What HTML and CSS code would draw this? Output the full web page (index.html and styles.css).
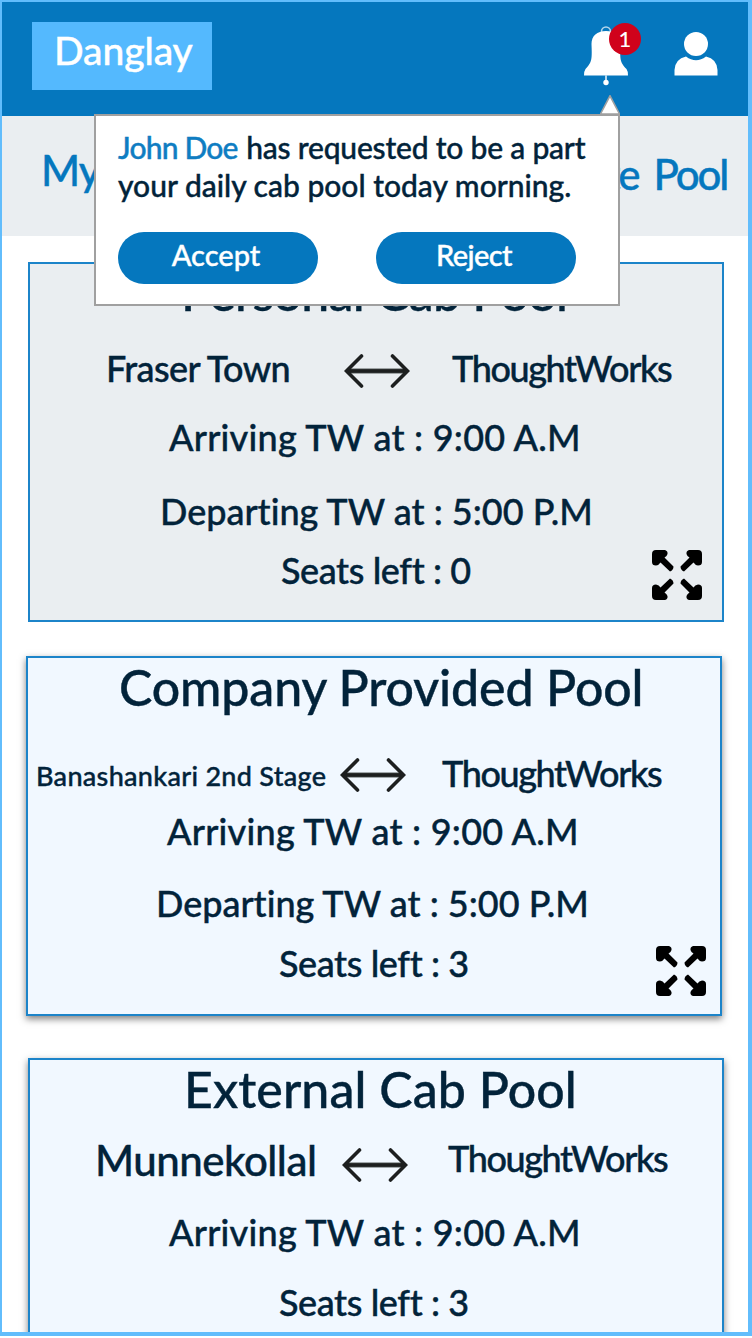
FILE: index.html
```
<!DOCTYPE html>
<html lang="en">
<head>
<meta charset="utf-8">
<title>Danglay</title>
<link rel="stylesheet" href="styles.css">
</head>
<body>
<svg width="0" height="0" class="defs">
  <symbol id="both-ways" viewBox="0 0 66 36">
    <path d="M3 18H63" stroke="#555b5b" stroke-width="5"/>
    <path d="M3 18H63M17.500 3L2.500 18L17.500 33M48.500 3L63.500 18L48.500 33" fill="none" stroke="#1d1f1f" stroke-width="3.600" stroke-linecap="round"/>
  </symbol>
  <symbol id="expand" viewBox="0 0 50 50">
    <g id="expand-arrow">
      <path d="M4 0H13Q16 1 15.500 4Q15 6 12.500 7.500L21.500 16.500Q21.500 20 18 21.500L8.500 12.500Q7 15 4 15.500Q0 15.500 0 12V4Q0 0 4 0Z"/>
    </g>
    <use href="#expand-arrow" transform="matrix(-1 0 0 1 50 0)"/>
    <use href="#expand-arrow" transform="matrix(1 0 0 -1 0 50)"/>
    <use href="#expand-arrow" transform="matrix(-1 0 0 -1 50 50)"/>
  </symbol>
</svg>
<div class="frame">
  <header class="header">
    <div class="brand">Danglay</div>
    <div class="actions">
      <div class="bell">
        <svg width="44" height="60" viewBox="0 0 44 60">
          <circle cx="22" cy="5.500" r="4.500" fill="none" stroke="#b5d6ec" stroke-width="1.600"/>
          <path d="M22 5C13 5 7.500 10 7.500 18C8 32 8.500 36 1.500 43Q0 45 0 49.500H44Q44 45 42.500 43C35.500 36 36 32 36.500 18C36.500 10 31 5 22 5Z" fill="#fff"/>
          <path d="M22 49V56" stroke="#b5d6ec" stroke-width="2"/>
          <circle cx="22" cy="56.500" r="2.700" fill="#fff"/>
        </svg>
        <span class="count">1</span>
      </div>
      <svg width="44" height="44" viewBox="0 0 44 44" fill="#fff">
        <circle cx="22" cy="12" r="12"/>
        <path d="M0.500 43.500V38Q1 27 12 24.500Q22 32 32 24.500Q43 27 43.500 38V43.500Z"/>
      </svg>
    </div>
  </header>
  <nav class="tabs">
    <span class="tab tab-mine">My Pool</span>
    <span class="tab tab-create">Create Pool</span>
  </nav>
  <main class="pools">
    <section class="card card-personal">
      <h2 class="title">Personal Cab Pool</h2>
      <div class="route">
        <span class="origin">Fraser Town</span>
        <svg class="arrow" width="66" height="36"><use href="#both-ways"/></svg>
        <span class="dest">ThoughtWorks</span>
      </div>
      <p class="line arriving">Arriving TW at : 9:00 A.M</p>
      <p class="line departing">Departing TW at : 5:00 P.M</p>
      <p class="line seats">Seats left : 0</p>
      <svg class="expand" width="50" height="50"><use href="#expand"/></svg>
    </section>
    <section class="card card-company">
      <h2 class="title">Company Provided Pool</h2>
      <div class="route">
        <span class="origin">Banashankari 2nd Stage</span>
        <svg class="arrow" width="66" height="36"><use href="#both-ways"/></svg>
        <span class="dest">ThoughtWorks</span>
      </div>
      <p class="line arriving">Arriving TW at : 9:00 A.M</p>
      <p class="line departing">Departing TW at : 5:00 P.M</p>
      <p class="line seats">Seats left : 3</p>
      <svg class="expand" width="50" height="50"><use href="#expand"/></svg>
    </section>
    <section class="card card-external">
      <h2 class="title">External Cab Pool</h2>
      <div class="route">
        <span class="origin">Munnekollal</span>
        <svg class="arrow" width="66" height="36"><use href="#both-ways"/></svg>
        <span class="dest">ThoughtWorks</span>
      </div>
      <p class="line arriving">Arriving TW at : 9:00 A.M</p>
      <p class="line seats">Seats left : 3</p>
    </section>
  </main>
  <div class="popup">
    <svg class="pointer" width="20" height="20" viewBox="0 0 20 20"><path d="M0.500 19L10 0.800L19.500 19Z" fill="#fff" stroke="#a0a0a0" stroke-width="1.600"/></svg>
    <p class="message"><span class="name">John Doe</span> <span class="request">has requested to be a part</span><br>your daily cab pool today morning.</p>
    <div class="buttons">
      <button class="button accept">Accept</button>
      <button class="button reject">Reject</button>
    </div>
  </div>
</div>
</body>
</html>
```
FILE: styles.css
```
* { box-sizing: border-box; }
body {
  margin: 0;
  background: #fff;
  color: #02233a;
  font-family: Lato, "Liberation Sans", sans-serif;
  font-weight: 500;
  font-variant-ligatures: none;
  white-space: nowrap;
  -webkit-text-stroke: 0.4px;
}
.defs { position: absolute; }
.frame {
  position: relative;
  width: 752px;
  height: 1336px;
  border: 2px solid #62bdfc;
  border-right-width: 4px;
  border-bottom-width: 4px;
  overflow: hidden;
}
.header {
  display: flex;
  justify-content: space-between;
  align-items: flex-start;
  height: 114px;
  padding: 20px 30px;
  background: #0577be;
}
.brand {
  width: 180px;
  height: 68px;
  padding-left: 22px;
  background: #54b9fe;
  color: #fff;
  font-size: 39px;
  line-height: 56px;
  letter-spacing: -0.1px;
}
.actions { display: flex; gap: 46px; padding-top: 10px; }
.actions svg { display: block; }
.bell { position: relative; margin-top: -6px; }
.count {
  position: absolute;
  left: 25px;
  top: -3px;
  width: 32px;
  height: 32px;
  border-radius: 50%;
  background: #d0021b;
  color: #fff;
  font-size: 22px;
  line-height: 31px;
  text-align: center;
  -webkit-text-stroke: 0;
}
.tabs {
  display: flex;
  justify-content: space-between;
  height: 120px;
  padding: 0 21px 0 39px;
  background: #eaeef1;
  color: #0577be;
  font-size: 42px;
}
.tab-mine { line-height: 108px; letter-spacing: -1px; }
.tab-create { line-height: 116px; letter-spacing: -2.2px; word-spacing: 7px; }
.pools { display: flex; flex-direction: column; padding: 26px 0 0 26px; }
.card {
  position: relative;
  width: 696px;
  height: 360px;
  border: 2px solid #1c84c9;
  background: #f1f8ff;
  box-shadow: 0 3px 7px rgba(0, 0, 0, 0.5);
}
.title { margin: 0; font-size: 50px; font-weight: 500; line-height: 56px; }
.route { display: grid; height: 44px; font-size: 36px; line-height: 44px; }
.arrow { margin-top: 7px; }
.dest { letter-spacing: -1.4px; }
.line { margin: 0; font-size: 36px; line-height: 44px; }
.arriving { padding-left: 139px; letter-spacing: 0.25px; }
.seats { letter-spacing: -0.4px; }
.expand { position: absolute; }

.card-personal { background: #eaeef1; box-shadow: none; }
.card-personal .title { padding-left: 151px; letter-spacing: -0.7px; }
.card-personal .route { grid-template-columns: 238px 108px 1fr; margin-top: 26px; padding-left: 76px; }
.card-personal .origin { letter-spacing: -0.6px; }
.card-personal .arriving { margin-top: 25px; }
.card-personal .departing { margin-top: 30px; padding-left: 130px; }
.card-personal .seats { margin-top: 15px; padding-left: 251px; }
.card-personal .expand { right: 20px; bottom: 20px; }

.card-company { margin: 34px 0 0 -2px; padding-top: 1px; }
.card-company .title { padding-left: 91px; letter-spacing: -0.1px; }
.card-company .route { grid-template-columns: 304px 102px 1fr; margin-top: 36px; padding-left: 8px; }
.card-company .origin { padding-top: 3px; font-size: 27px; letter-spacing: 0.3px; }
.card-company .arrow { margin-top: 6px; }
.card-company .arriving { margin-top: 14px; }
.card-company .departing { margin-top: 28px; padding-left: 128px; }
.card-company .seats { margin-top: 16px; padding-left: 251px; }
.card-company .expand { right: 14px; bottom: 18px; }

.card-external { margin-top: 42px; padding-top: 1px; }
.card-external .title { padding-left: 154px; letter-spacing: 0.1px; }
.card-external .route { grid-template-columns: 247px 106px 1fr; margin-top: 19px; padding-left: 65px; }
.card-external .origin { padding-top: 2px; font-size: 42px; letter-spacing: -0.5px; }
.card-external .arrow { margin-top: 11px; }
.card-external .arriving { margin-top: 30px; }
.card-external .seats { margin-top: 26px; padding-left: 249px; }

.popup {
  position: absolute;
  left: 92px;
  top: 112px;
  width: 526px;
  height: 192px;
  padding: 12px 22px 10px;
  border: 2px solid #a0a0a0;
  background: #fff;
}
.pointer { position: absolute; right: -2px; top: -21px; }
.message { margin: 0; font-size: 30px; line-height: 38px; }
.name { color: #0f7dc2; letter-spacing: -0.8px; }
.request { margin-left: 1px; letter-spacing: -0.2px; }
.buttons { display: flex; gap: 58px; margin-top: 28px; }
.button {
  width: 200px;
  height: 52px;
  padding: 0 4px 6px 0;
  border: 0;
  border-radius: 26px;
  background: #0577be;
  color: #fff;
  font: 500 29px/46px Lato, "Liberation Sans", sans-serif;
}
.reject { letter-spacing: -0.6px; }
```
